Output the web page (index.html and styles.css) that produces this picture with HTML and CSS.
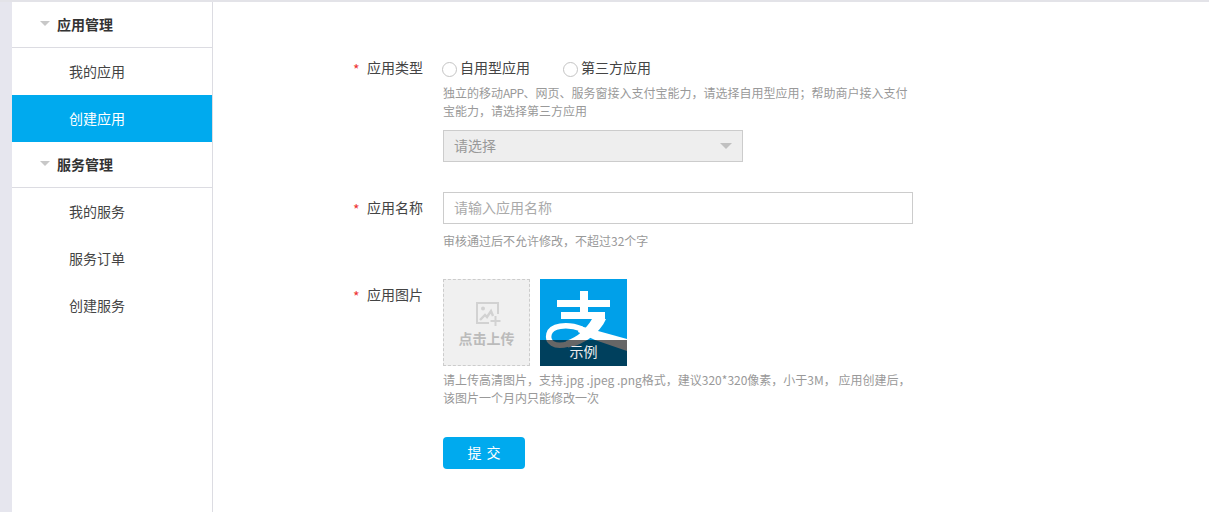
FILE: index.html
```html
<!DOCTYPE html>
<html lang="zh-CN">
<head>
<meta charset="utf-8">
<title>创建应用</title>
<link rel="stylesheet" href="styles.css">
</head>
<body>
<div class="page">
  <aside class="sidebar">
    <div class="group"><span class="caret"></span>应用管理</div>
    <a class="item">我的应用</a>
    <a class="item active">创建应用</a>
    <div class="group"><span class="caret"></span>服务管理</div>
    <a class="item">我的服务</a>
    <a class="item">服务订单</a>
    <a class="item">创建服务</a>
  </aside>
  <main class="main">
    <div class="row row-type">
      <div class="label"><span class="star">*</span>应用类型</div>
      <div class="field">
        <div class="radios">
          <label class="radio"><span class="dot"></span>自用型应用</label>
          <label class="radio"><span class="dot"></span>第三方应用</label>
        </div>
        <p class="hint hint-type">独立的移动<span class="tight">APP</span>、网页、服务窗接入支付宝能力，请选择自用型应用；帮助商户接入支付<br>宝能力，请选择第三方应用</p>
        <div class="select"><span>请选择</span><span class="select-caret"></span></div>
      </div>
    </div>
    <div class="row row-name">
      <div class="label label-name"><span class="star">*</span>应用名称</div>
      <div class="field">
        <div class="input">请输入应用名称</div>
        <p class="hint hint-name">审核通过后不允许修改，不超过32个字</p>
      </div>
    </div>
    <div class="row row-pic">
      <div class="label label-pic"><span class="star">*</span>应用图片</div>
      <div class="field">
        <div class="pics">
          <div class="upload">
            <svg class="upload-icon" width="28" height="28" viewBox="0 0 28 28" fill="none" stroke="#d2d2d2" stroke-width="2">
              <path d="M25 14V3H4v20h12"/>
              <circle cx="10" cy="8.500" r="2" fill="#d2d2d2" stroke="none"/>
              <path d="M7 20l5-5 2 2 4-6 2 5" stroke-width="2.400"/>
              <path d="M22.500 16v10M17.500 21h10"/>
            </svg>
            <span class="upload-text">点击上传</span>
          </div>
          <div class="sample">
            <svg class="logo" width="87" height="87" viewBox="0 0 87 87">
              <rect width="87" height="87" fill="#00a0e9"/>
              <g fill="#fff">
                <rect x="40" y="12" width="8" height="28"/>
                <rect x="17" y="21" width="53" height="7"/>
                <rect x="21" y="33" width="44" height="7"/>
                <path d="M40 47 87 60V72L55 61 38 53Z"/>
                <path d="M52 40H66C60 54 44 66 28 68.500L26 62C38 58 46 50 52 40Z"/>
              </g>
              <path d="M28 65C14 69 7 63 9 55 11 47 26 44 42 50" fill="none" stroke="#fff" stroke-width="5.500"/>
              <rect y="61" width="87" height="26" fill="#000" opacity=".6"/>
            </svg>
            <span class="sample-text">示例</span>
          </div>
        </div>
        <p class="hint hint-pic">请上传高清图片，支持.jpg .jpeg .png格式，建议320*320像素，小于3M， 应用创建后，<br>该图片一个月内只能修改一次</p>
        <button class="submit" type="button">提 交</button>
      </div>
    </div>
  </main>
</div>
</body>
</html>
```
FILE: styles.css
```css
* { box-sizing: border-box; }
html, body { margin: 0; height: 100%; overflow: hidden; }
body {
  background: #fff;
  font-family: "Noto Sans CJK SC", "Liberation Sans", sans-serif;
  color: #333;
}
.page {
  display: flex;
  height: 512px;
  border-top: 2px solid #e3e3e8;
  padding-left: 12px;
  background: #e6e6ee;
}
.sidebar {
  width: 201px;
  flex: none;
  background: #fff;
  border-right: 1px solid #dcdce2;
}
.group {
  height: 46px;
  display: flex;
  align-items: center;
  padding-left: 28px;
  padding-bottom: 2px;
  font-size: 14px;
  font-weight: 700;
  color: #333;
  border-bottom: 1px solid #dcdce2;
}
.caret {
  width: 0;
  height: 0;
  margin-right: 7px;
  border-style: solid;
  border-width: 5px 5px 0;
  border-color: #c8c8c8 transparent transparent;
}
.item {
  display: flex;
  align-items: center;
  height: 47px;
  padding-left: 57px;
  padding-bottom: 2px;
  font-size: 14px;
  color: #444;
}
.active { background: #00aaee; color: #fff; }
.main { flex: 1; background: #fff; padding-left: 140px; }
.row { display: flex; }
.row-type { padding-top: 56px; }
.row-name { padding-top: 30px; }
.row-pic { padding-top: 29px; }
.label {
  width: 90px;
  flex: none;
  margin-top: -1px;
  font-size: 14px;
  line-height: 20px;
  color: #444;
  display: flex;
}
.label-name { padding-top: 6px; }
.label-pic { padding-top: 6px; }
.star { color: #e33; width: 14px; flex: none; padding-top: 2px; }
.field { width: 480px; }
.radios { display: flex; gap: 33px; height: 20px; margin-left: -1px; }
.radio { display: flex; align-items: center; padding-bottom: 2px; font-size: 14px; color: #444; gap: 3px; }
.dot {
  width: 15px;
  height: 15px;
  border: 1px solid #c4c4c4;
  border-radius: 50%;
  background: #fff;
  margin-top: 4px;
}
.hint { margin: 0; font-size: 12px; line-height: 18px; color: #999; }
.hint-type { padding-top: 6px; }
.tight { letter-spacing: -0.7px; }
.select {
  width: 300px;
  height: 32px;
  margin-top: 10px;
  padding: 0 10px 2px;
  display: flex;
  align-items: center;
  justify-content: space-between;
  background: #eee;
  border: 1px solid #ccc;
  font-size: 14px;
  color: #999;
}
.select-caret {
  width: 0;
  height: 0;
  margin-top: 2px;
  border-style: solid;
  border-width: 6px 6px 0;
  border-color: #c0c0c0 transparent transparent;
}
.input {
  width: 470px;
  height: 32px;
  padding: 0 10px 2px;
  display: flex;
  align-items: center;
  border: 1px solid #ccc;
  font-size: 14px;
  color: #aaa;
}
.hint-name { padding-top: 8px; }
.pics { display: flex; gap: 10px; }
.upload {
  width: 87px;
  height: 87px;
  background: #f0f0f0;
  border: 1px dashed #ccc;
  display: flex;
  flex-direction: column;
  align-items: center;
  padding-top: 20px;
}
.upload-icon { flex: none; }
.upload-text { font-size: 14px; font-weight: 700; color: #bbb; line-height: 20px; }
.sample { position: relative; width: 87px; height: 87px; }
.logo { display: block; }
.sample-text {
  position: absolute;
  left: 0;
  right: 0;
  bottom: 6px;
  text-align: center;
  font-size: 14px;
  line-height: 18px;
  color: #eee;
}
.hint-pic { padding-top: 5px; }
.submit {
  display: block;
  width: 82px;
  height: 32px;
  margin-top: 30px;
  padding: 0 0 2px;
  border: 0;
  border-radius: 4px;
  background: #00aaee;
  color: #fff;
  font-family: inherit;
  font-size: 14px;
  word-spacing: 2px;
}
```
